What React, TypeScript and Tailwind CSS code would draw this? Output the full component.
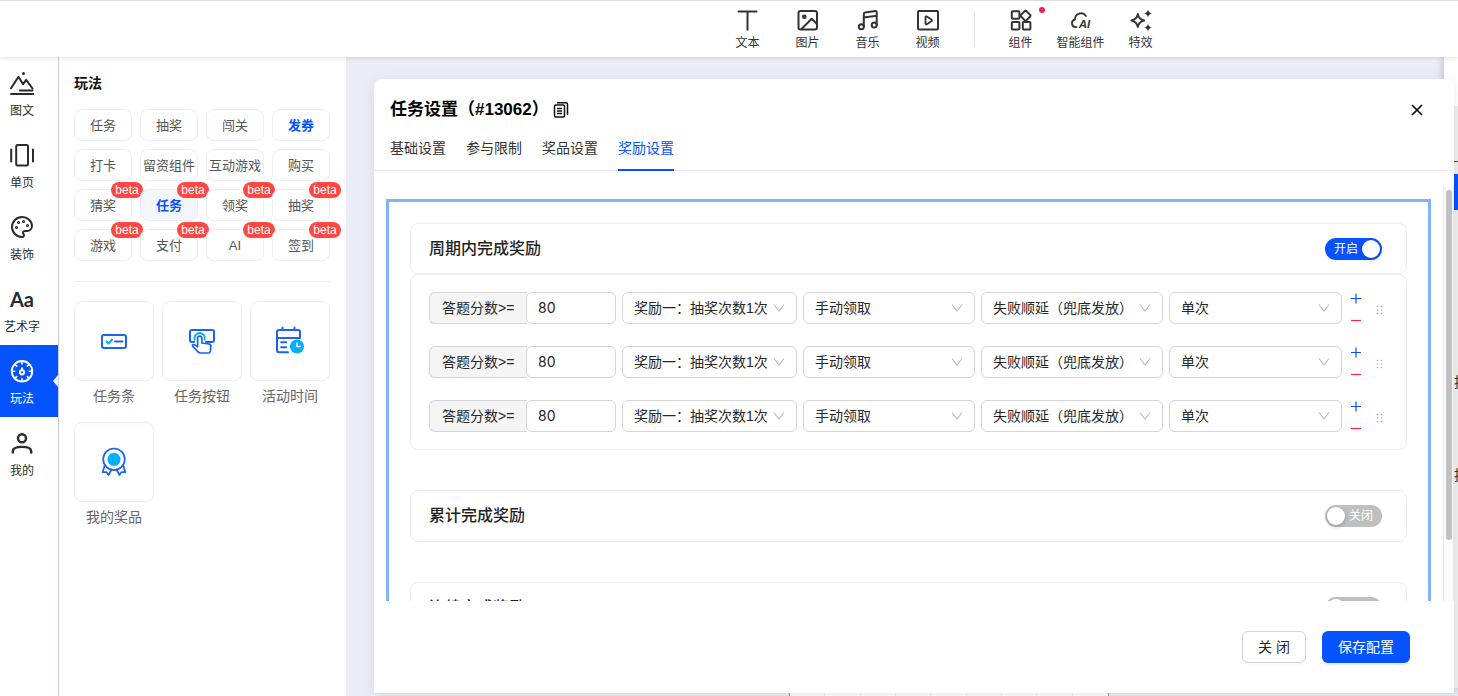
import { useState } from "react";
import type { ReactNode } from "react";
import { Palette } from "lucide-react";

type TItem = {
    label: string;
    icon: ReactNode;
    dot?: boolean;
}

type TIconProps = {
    children: ReactNode;
    width?: number;
}

function Icon({ children, width = 2 }: TIconProps) {
    return (
        <svg className="size-6 shrink-0" viewBox="0 0 24 24" fill="none" stroke="currentColor" strokeWidth={width} strokeLinecap="round" strokeLinejoin="round" aria-hidden="true">
            {children}
        </svg>
    )
}

function CardIcon({ children }: TIconProps) {
    return (
        <svg className="size-8" viewBox="0 0 32 32" fill="none" stroke="#1d63ee" strokeWidth="2" strokeLinecap="round" strokeLinejoin="round" aria-hidden="true">
            {children}
        </svg>
    )
}

const mediaTools: TItem[] = [
    { label: "文本", icon: <Icon><path d="M2.500 3.500h18M11.500 3.500v18.300" /></Icon> },
    {
        label: "图片", icon: <Icon><rect x="2.500" y="3" width="18.500" height="18.500" rx="2" /><circle cx="8.300" cy="8.800" r="1.300" /><path d="M5.500 21 15.700 10.800l5 5" /></Icon>
    },
    {
        label: "音乐", icon: <Icon><circle cx="5.300" cy="18.700" r="2.500" /><circle cx="18.200" cy="17" r="2.500" /><path d="M7.800 18.500V6q0-1.300 1.200-1.400l10.500-1.500q1.200-.1 1.200 1V17M7.800 9.600l12.900-1.800" /></Icon>
    },
    {
        label: "视频", icon: <Icon><rect x="2" y="3" width="20" height="18.500" rx="1" /><path strokeWidth="1.800" d="M9.500 9.300v6q0 1.500 1.300.9l4.700-3q1-.8 0-1.600l-4.700-3q-1.300-.7-1.300.7Z" /></Icon>
    },
];

const widgetTools: TItem[] = [
    {
        label: "组件", dot: true, icon: <Icon><rect x="2.800" y="3.200" width="7.600" height="7.600" rx="1" /><rect x="2.800" y="14" width="7.600" height="7.600" rx="1" /><rect x="13.800" y="14" width="7.600" height="7.600" rx="1" /><path d="m17.200 3 4 3.900q.8.800 0 1.600l-3.900 3.900q-.7.700-1.400 0L12 8.500q-.8-.8 0-1.600L15.800 3q.7-.7 1.400 0Z" /></Icon>
    },
    {
        label: "智能组件", icon: <Icon width={1.8}><path d="M7.500 19.200h-.8a3.900 3.900 0 0 1-.7-7.700A6 6 0 0 1 17 8" /><text x="9.800" y="19.700" fontSize="11.500" fontWeight="700" fontStyle="italic" fontFamily="Liberation Sans" fill="currentColor" stroke="none">AI</text></Icon>
    },
    {
        label: "特效", icon: <Icon width={1.8}><path d="M8.800 6q.9 5.300 6.400 6.500-5.500 1.200-6.400 6.500-.9-5.300-6.400-6.500Q7.900 11.300 8.800 6Z" /><path stroke="none" fill="currentColor" d="M19 1.500q.6 3.200 4 3.900-3.400.7-4 3.900-.6-3.200-4-3.900 3.400-.7 4-3.900ZM19 15.700q.6 3.200 4 3.900-3.400.7-4 3.900-.6-3.200-4-3.900 3.400-.7 4-3.900Z" /></Icon>
    },
];

const navItems: TItem[] = [
    {
        label: "图文", icon: <Icon><path d="m1 17.300 7.500-11.500 4.600 7.400 3.100-4.400 6.300 8.700M10 19.400h12.500M1 23h22.300" /><circle cx="13.500" cy="2.500" r="1.500" fill="currentColor" stroke="none" /></Icon>
    },
    {
        label: "单页", icon: <Icon><rect x="6.200" y="2" width="11.800" height="20.500" rx="1.500" /><path d="M1.200 6.500v12M23 6.500v12" /></Icon>
    },
    { label: "装饰", icon: <Palette className="size-6" strokeWidth={2} aria-hidden="true" /> },
    { label: "艺术字", icon: <span className="h-6 font-['Lato'] text-xl leading-6 font-bold">Aa</span> },
    {
        label: "玩法", icon: <Icon><circle cx="12" cy="12.300" r="10.200" /><path strokeWidth="1.600" d="M12 2.500V5M12 19.600v2.500M2.300 12.300h2.400M19.300 12.300h2.400M5.100 5.500l1.600 1.600M18.900 5.500l-1.600 1.600M5.100 19.100l1.600-1.600M18.900 19.100l-1.600-1.600" /><path d="M12 9.200v1.600" /><circle cx="12" cy="13.300" r="2.100" /></Icon>
    },
    {
        label: "我的", icon: <Icon width={2.4}><circle cx="12" cy="7.300" r="4" /><path d="M2.800 21.500v-1.300q0-4.300 9.200-4.300t9.200 4.300v1.300" /></Icon>
    },
];

const tags = [
    { label: "任务" },
    { label: "抽奖" },
    { label: "闯关" },
    { label: "发券", highlight: true },
    { label: "打卡" },
    { label: "留资组件" },
    { label: "互动游戏" },
    { label: "购买" },
    { label: "猜奖", beta: true },
    { label: "任务", beta: true, highlight: true, active: true },
    { label: "领奖", beta: true },
    { label: "抽奖", beta: true },
    { label: "游戏", beta: true },
    { label: "支付", beta: true },
    { label: "AI", beta: true },
    { label: "签到", beta: true },
];

const widgets: TItem[] = [
    {
        label: "任务条", icon: <CardIcon><rect x="4" y="10" width="24" height="13" rx="2" /><path stroke="#00b0ff" d="m8.500 16.500 2 2 3.500-4" /><path d="M17 16.500h7.500" /></CardIcon>
    },
    {
        label: "任务按钮", icon: <CardIcon><path d="M8 17H6a2 2 0 0 1-2-2V7a2 2 0 0 1 2-2h20a2 2 0 0 1 2 2v8a2 2 0 0 1-2 2h-6" /><path stroke="#00b0ff" d="M8.800 14.600a5.100 5.100 0 1 1 9.700 0" /><path strokeWidth="1.700" d="M11.600 21.800v-8.600a2.100 2.100 0 0 1 4.200 0V18l7.200 1q2 .3 1.900 2.200l-.5 5q-.2 1.800-2 1.800h-8q-1.400 0-2.300-1.100l-5.300-5.500q-1-1.600.7-1.900 1.200 0 4.100 2.300Z" /></CardIcon>
    },
    {
        label: "活动时间", icon: <CardIcon><path d="M14 27.300H5a2 2 0 0 1-2-2V7a2 2 0 0 1 2-2h19a2 2 0 0 1 2 2v6H3M8.500 2.500v2M20.500 2.500v2M7.200 17.300h5M7.200 22.300h5" /><circle cx="23" cy="21.500" r="7" fill="#00b0ff" stroke="none" /><path stroke="#fff" strokeWidth="1.500" d="M23 18v3.600h3.200" /></CardIcon>
    },
    {
        label: "我的奖品", icon: <CardIcon><g strokeWidth="1.700"><circle cx="16" cy="13.300" r="10.800" /><path d="m6.700 19.500-2 6.700 3.800-.2 2 3 3-5.500M25.300 19.500l2 6.700-3.800-.2-2 3-3-5.500" /></g><circle cx="16" cy="13.300" r="6.500" fill="#00b0ff" stroke="none" /></CardIcon>
    },
];

const tabs = ["基础设置", "参与限制", "奖品设置", "奖励设置"];

const selects = [
    { name: "奖励", value: "奖励一：抽奖次数1次" },
    { name: "领取方式", value: "手动领取" },
    { name: "失败处理", value: "失败顺延（兜底发放）" },
    { name: "次数", value: "单次" },
];

function ToolButton({ label, icon, dot }: TItem) {
    return (
        <button className="relative flex w-15 flex-col items-center gap-[3px] pt-[7px] text-xs leading-4 text-[#333]">
            {icon}
            {label}
            {dot && <i className="absolute top-1.5 right-1.5 size-1.5 rounded-full bg-[#ff1e56]" />}
        </button>
    )
}

function Toolbar() {
    return (
        <header className="relative z-10 flex h-[57px] shrink-0 justify-center border-t border-[#ddd] bg-white pl-[430px] shadow-[0_1px_4px_rgba(0,0,0,0.12)]">
            {mediaTools.map((tool) => <ToolButton key={tool.label} {...tool} />)}
            <div className="mx-4 mt-2.5 h-9 w-px bg-[#dde5e8]" />
            {widgetTools.map((tool) => <ToolButton key={tool.label} {...tool} />)}
        </header>
    )
}

function SideNav() {
    return (
        <nav className="flex w-[59px] shrink-0 flex-col border-r border-[#c0ccd8] bg-white">
            {navItems.map(({ label, icon }) => {
                const active = label === "玩法";
                return (
                    <button key={label} className={`relative flex h-18 flex-col items-center gap-2 pt-3.5 pr-3.5 text-xs leading-4 whitespace-nowrap ${active ? "bg-[#0552ff] text-white" : "text-[#2b2b2b]"}`}>
                        {icon}
                        {label}
                        {active && <i className="absolute top-[30px] right-0 border-y-6 border-r-5 border-y-transparent border-r-[#f0f4fb]" />}
                    </button>
                )
            })}
        </nav>
    )
}

function PlayPanel() {
    return (
        <aside className="w-[287px] shrink-0 bg-white px-[15px] pt-4">
            <h2 className="text-sm leading-5 font-bold text-[#111]">玩法</h2>
            <div className="mt-4 grid grid-cols-[repeat(4,58px)] gap-2">
                {tags.map(({ label, beta, highlight, active }, index) => (
                    <button key={index} className={`relative h-8 rounded-lg border border-[#ebedf8] pt-px text-[13px] leading-[29px] whitespace-nowrap ${highlight ? "font-bold text-[#0552ff]" : "text-[#555]"} ${active ? "bg-[#f3f6fc]" : "bg-white"}`}>
                        <span className="flex justify-center">{label}</span>
                        {beta && <span className="absolute -top-2 -right-3 h-4 w-8 rounded-full bg-[#ff4843] text-center text-xs leading-4 font-normal text-white">beta</span>}
                    </button>
                ))}
            </div>
            <div className="mt-5 border-t border-[#ebedf2] pt-[19px]">
                <div className="grid grid-cols-[repeat(3,80px)] gap-x-2 gap-y-4">
                    {widgets.map(({ label, icon }) => (
                        <button key={label} className="flex flex-col items-center gap-[5px] text-sm leading-5 text-[#666]">
                            <span className="flex size-20 items-center justify-center rounded-lg border border-[#ebedf8]">{icon}</span>
                            {label}
                        </button>
                    ))}
                </div>
            </div>
        </aside>
    )
}

function Switch({ on, onChange }: { on: boolean, onChange: () => void }) {
    return (
        <button role="switch" aria-checked={on} onClick={onChange} className={`flex h-[22px] w-[57px] items-center justify-between rounded-full px-0.5 text-xs leading-4 text-white ${on ? "bg-[#0552ff] pl-[9px]" : "flex-row-reverse bg-[#bfbfbf] pr-[9px]"}`}>
            {on ? "开启" : "关闭"}
            <i className="size-[18px] rounded-full bg-white shadow-[0_2px_4px_rgba(0,35,11,0.2)]" />
        </button>
    )
}

function RewardRow({ index }: { index: number }) {
    return (
        <div className="grid grid-cols-[187px_175fr_172fr_182fr_173fr_16px_18px] gap-1.5 text-sm text-[#262626]">
            <div className="flex h-8">
                <label htmlFor={`score-${index}`} className="w-[98px] shrink-0 rounded-l-md border border-r-0 border-[#d4d4d4] bg-[#f5f5f5] pl-3 leading-[30px] whitespace-nowrap">答题分数&gt;=</label>
                <input id={`score-${index}`} defaultValue="80" className="-ml-px w-[90px] rounded-md border border-[#d4d4d4] bg-white px-[11px] font-['Inter']" />
            </div>
            {selects.map(({ name, value }) => (
                <div key={name} className="relative">
                    <select aria-label={name} className="h-8 w-full appearance-none rounded-md border border-[#d4d4d4] bg-white pr-6 pl-[11px]">
                        <option>{value}</option>
                    </select>
                    <svg className="pointer-events-none absolute top-2.5 right-3 size-3" viewBox="0 0 12 12" fill="none" stroke="#bbb" strokeWidth="1.100" aria-hidden="true">
                        <path d="m1 2.500 5 6.500 5-6.500" />
                    </svg>
                </div>
            ))}
            <div className="flex flex-col items-center justify-between">
                <button aria-label="添加" className="text-[#0552ff]">
                    <svg className="size-3.5" viewBox="0 0 14 14" stroke="currentColor" strokeWidth="1.200"><path d="M2 6.500h10M7 1.500v10" /></svg>
                </button>
                <button aria-label="删除" className="text-[#ff1e56]">
                    <svg className="size-2.5" viewBox="0 0 10 10" stroke="currentColor" strokeWidth="1.200"><path d="M0 6.500h10" /></svg>
                </button>
            </div>
            <svg className="mt-3 ml-1.5 h-3 w-2 cursor-move" viewBox="0 0 8 12" fill="#a8a8a8" aria-hidden="true">
                <circle cx="1.500" cy="2.500" r=".8" />
                <circle cx="5.500" cy="2.500" r=".8" />
                <circle cx="1.500" cy="6" r=".8" />
                <circle cx="5.500" cy="6" r=".8" />
                <circle cx="1.500" cy="9.500" r=".8" />
                <circle cx="5.500" cy="9.500" r=".8" />
            </svg>
        </div>
    )
}

function RewardSection({ title, defaultOn = false }: { title: string, defaultOn?: boolean }) {

    const [on, setOn] = useState(defaultOn);

    return (
        <section>
            <div className={`flex items-center justify-between rounded-lg border border-[#ededed] pr-6 pl-[18px] ${on ? "h-[51px]" : "h-[52px]"}`}>
                <h3 className="text-base font-medium text-[#1f1f1f]">{title}</h3>
                <Switch on={on} onChange={() => setOn(!on)} />
            </div>
            {on && (
                <div className="flex flex-col gap-[22px] rounded-lg border border-[#ededed] px-[18px] py-[17px]">
                    {[0, 1, 2].map((index) => <RewardRow key={index} index={index} />)}
                </div>
            )}
        </section>
    )
}

function TaskDialog() {
    return (
        <div role="dialog" aria-label="任务设置" className="absolute top-[22px] right-1 bottom-[3px] left-7 flex flex-col rounded-t-lg bg-white shadow-[0_4px_16px_rgba(0,0,0,0.08)]">
            <div className="flex items-center justify-between pt-[17px] pr-[30px] pl-4">
                <div className="flex items-center gap-1">
                    <h1 className="text-[17px] leading-7 font-bold text-black">任务设置（#13062）</h1>
                    <button aria-label="复制">
                        <svg className="size-4" viewBox="0 0 16 16" fill="none" stroke="#111" strokeWidth="1.500" strokeLinejoin="round">
                            <rect x="1.500" y="3" width="10" height="12" rx="1.500" />
                            <path d="M4 .8h9q1.500 0 1.500 1.500V13M4 6.500h5M4 9h5M4 11.500h5" />
                        </svg>
                    </button>
                </div>
                <button aria-label="关闭">
                    <svg className="size-3.5" viewBox="0 0 14 14" stroke="#000" strokeWidth="1.600"><path d="m2 2 10 10M12 2 2 12" /></svg>
                </button>
            </div>
            <div role="tablist" className="mt-3.5 flex gap-5 border-b border-[#ededed] px-4 text-sm leading-5">
                {tabs.map((tab) => {
                    const active = tab === "奖励设置";
                    return (
                        <button key={tab} role="tab" aria-selected={active} className={`-mb-px border-b-2 pb-[11px] ${active ? "border-[#0552ff] text-[#0552ff]" : "border-transparent text-[#333]"}`}>{tab}</button>
                    )
                })}
            </div>
            <div className="mt-[15px] flex min-h-0 flex-1 overflow-hidden">
                <div className="min-w-0 flex-1 overflow-hidden px-3 pt-[13px]">
                    <div className="flex flex-col gap-10 border-3 border-[#7fb3fa] p-[21px]">
                        <RewardSection title="周期内完成奖励" defaultOn />
                        <RewardSection title="累计完成奖励" />
                        <RewardSection title="连续完成奖励" />
                    </div>
                </div>
                <div className="w-[11px] shrink-0 border-x border-[#e8e8e8] bg-[#fafafa] px-0.5 pt-1">
                    <div className="h-[350px] w-1.5 rounded-full bg-[#c1c1c1]" />
                </div>
            </div>
            <div className="flex h-[92px] shrink-0 items-center justify-end gap-4 pr-11 text-sm">
                <button className="h-8 w-16 rounded-md border border-[#d4d4d4] bg-white text-[#262626] shadow-[0_2px_0_rgba(0,0,0,0.02)]">关 闭</button>
                <button className="h-8 w-22 rounded-md bg-[#0552ff] text-white shadow-[0_2px_0_rgba(5,82,255,0.1)]">保存配置</button>
            </div>
        </div>
    )
}

function SettingsStrip() {
    return (
        <div className="mb-2 flex w-3.5 flex-col overflow-hidden bg-white shadow-[0_0_8px_rgba(80,80,140,0.4)]">
            <div className="h-[49px]" />
            <div className="flex-1 bg-[#eee] pl-2.5 text-sm leading-5 text-[#333]">
                <div className="mt-[55px] h-px bg-[#0552ff]" />
                <div className="mt-3 h-9 bg-[#0552ff]" />
                <div className="mt-[162px] h-5 w-1 overflow-hidden">按</div>
                <div className="mt-[73px] h-5 w-1 overflow-hidden">按</div>
            </div>
        </div>
    )
}

// phone preview, its tab bar shows below the dialog
function PhonePreview() {
    return (
        <div className="mr-[335px] grid w-80 grid-cols-9 divide-x divide-[#eee] self-end border-x border-[#8a96a8] bg-[#fcfcfc]">
            {[...Array(9)].map((_, index) => <div key={index} className="h-12" />)}
        </div>
    )
}

export default function App() {
    return (
        <div className="flex h-screen flex-col overflow-hidden bg-[#e8edf6] font-['Liberation_Sans','Noto_Sans_CJK_SC',sans-serif]">
            <Toolbar />
            <div className="flex min-h-0 flex-1">
                <SideNav />
                <PlayPanel />
                <main className="relative flex min-w-0 flex-1 justify-end">
                    <PhonePreview />
                    <SettingsStrip />
                    <TaskDialog />
                </main>
            </div>
        </div>
    )
}
